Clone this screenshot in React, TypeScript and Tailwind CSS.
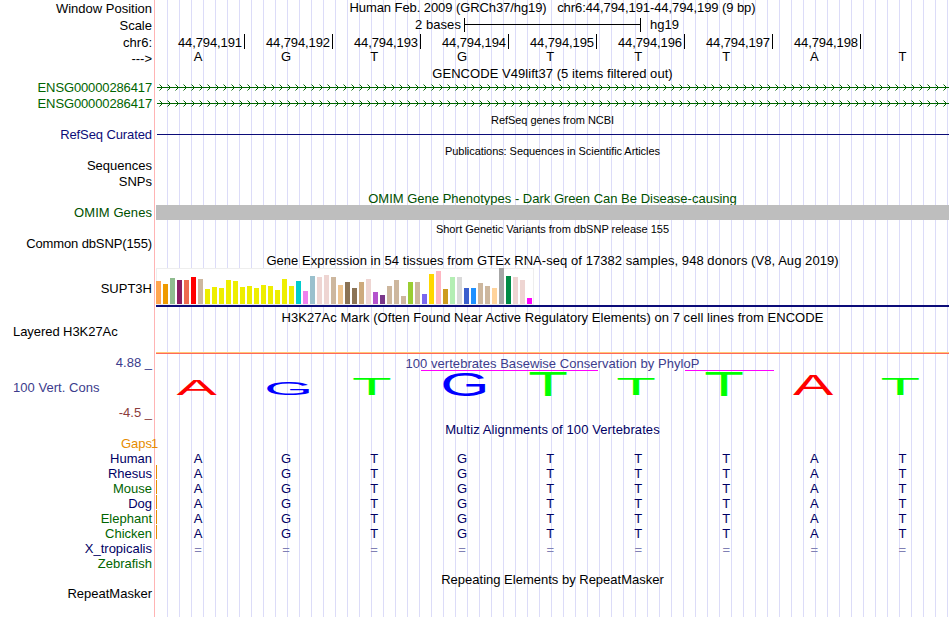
import React from 'react';
import clsx from 'clsx';

const LABELS: { text: string; className: string }[] = [
  { text: 'Window Position', className: 'mt-px' },
  { text: 'Scale', className: 'mt-[2px]' },
  { text: 'chr6:', className: 'mt-[2px]' },
  { text: '--->', className: 'mt-px' },
  { text: 'ENSG00000286417', className: 'mt-[14px] tracking-[-0.13px] text-[#006400]' },
  { text: 'ENSG00000286417', className: 'mt-px tracking-[-0.13px] text-[#006400]' },
  { text: 'RefSeq Curated', className: 'mt-4 tracking-[-0.1px] text-[#0c0c78]' },
  { text: 'Sequences', className: 'mt-4' },
  { text: 'SNPs', className: 'mt-px' },
  { text: 'OMIM Genes', className: 'mt-4 tracking-[0.06px] text-[#005000]' },
  { text: 'Common dbSNP(155)', className: 'mt-4 tracking-[-0.12px]' },
  { text: 'SUPT3H', className: 'mt-[30px]' },
  { text: 'Layered H3K27Ac', className: 'mt-7 self-start tracking-[-0.06px]' },
  { text: '4.88 _', className: 'mt-4 text-[#3c3c8c]' },
  { text: '100 Vert. Cons', className: 'mt-[10px] self-start tracking-[0.04px] text-[#3c3c8c]' },
  { text: '-4.5 _', className: 'mt-[10px] text-[#8c3c3c]' },
  { text: 'Gaps', className: 'mt-4 text-[#e68c00]' },
  { text: 'Human', className: 'text-[#000064]' },
  { text: 'Rhesus', className: 'text-[#000064]' },
  { text: 'Mouse', className: 'text-[#006400]' },
  { text: 'Dog', className: 'text-[#000064]' },
  { text: 'Elephant', className: 'text-[#006400]' },
  { text: 'Chicken', className: 'text-[#006400]' },
  { text: 'X_tropicalis', className: 'text-[#000064]' },
  { text: 'Zebrafish', className: 'text-[#006400]' },
  { text: 'RepeatMasker', className: 'mt-[15px]' },
];

const POSITIONS = [191, 192, 193, 194, 195, 196, 197, 198];
const BASES = 'AGTGTTTAT'.split('');
const ALIGNED = ['Human', 'Rhesus', 'Mouse', 'Dog', 'Elephant', 'Chicken'];

// [height, color] for each GTEx tissue
const TISSUES: [number, string][] = [
  [23, '#ffa54f'], [20, '#ee9a00'], [26, '#8fbc8f'], [24, '#8b1c62'],
  [24, '#ee6a50'], [27, '#ff0000'], [25, '#cdb79e'], [15, '#eeee00'],
  [17, '#eeee00'], [16, '#eeee00'], [24, '#eeee00'], [23, '#eeee00'],
  [17, '#eeee00'], [18, '#eeee00'], [16, '#eeee00'], [19, '#eeee00'],
  [18, '#eeee00'], [14, '#eeee00'], [25, '#eeee00'], [18, '#eeee00'],
  [23, '#00cdcd'], [13, '#ee82ee'], [28, '#9ac0cd'], [27, '#eed5d2'],
  [29, '#eed5d2'], [27, '#cdb79e'], [19, '#eec591'], [22, '#8b7355'],
  [16, '#8b7355'], [22, '#cdaa7d'], [25, '#eed5d2'], [12, '#b452cd'],
  [9, '#7a378b'], [18, '#cdb79e'], [24, '#cdb79e'], [8, '#cdb79e'],
  [22, '#9acd32'], [22, '#cdb79e'], [10, '#7a67ee'], [30, '#ffd700'],
  [33, '#ffb6c1'], [15, '#cd9b1d'], [27, '#b4eeb4'], [27, '#d9d9d9'],
  [16, '#3a5fcd'], [16, '#1e90ff'], [21, '#cdb79e'], [18, '#cdb79e'],
  [16, '#ffd39b'], [36, '#a6a6a6'], [28, '#008b45'], [27, '#eed5d2'],
  [24, '#eed5d2'], [6, '#ff00ff'],
];

// top and bottom are measured from the top of the conservation plot
const LOGO = [
  { base: 'A', top: 9, bottom: 25 },
  { base: 'G', top: 12, bottom: 25 },
  { base: 'T', top: 8, bottom: 25 },
  { base: 'G', top: 2, bottom: 26 },
  { base: 'T', top: 2, bottom: 26 },
  { base: 'T', top: 8, bottom: 25 },
  { base: 'T', top: 2, bottom: 26 },
  { base: 'A', top: 4, bottom: 25 },
  { base: 'T', top: 9, bottom: 25 },
];

const GLYPHS: Record<string, { color: string; left: number; scale: number; ink: number; drop: number }> = {
  A: { color: '#ff0000', left: 20.6, scale: 0.605, ink: 70, drop: 0 },
  G: { color: '#0000ff', left: 20, scale: 0.635, ink: 72, drop: 1 },
  T: { color: '#00ff00', left: 20, scale: 0.65, ink: 69.5, drop: 0 },
};

const Title: React.FC<{ className?: string; small?: boolean; children: React.ReactNode }> = ({
  className,
  small,
  children,
}) => (
  <div
    className={clsx(
      'h-[15px] shrink-0 text-center leading-[15px] whitespace-pre',
      small && 'text-[11px]',
      className,
    )}
  >
    {children}
  </div>
);

const BaseRow: React.FC<{ bases: string[]; className?: string }> = ({ bases, className }) => (
  <div className={clsx('-ml-[2px] flex h-[15px] shrink-0', className)}>
    {bases.map((base, i) => (
      <span key={i} className="w-[88.05px] shrink-0 text-center">
        {base}
      </span>
    ))}
  </div>
);

const GeneArrows: React.FC<{ className?: string }> = ({ className }) => (
  <svg className={clsx('block h-[7px] w-[793px] shrink-0', className)} viewBox="0 0 793 7">
    <path d="M1 3.5H793" stroke="#006400" />
    {Array.from({ length: 99 }, (_, i) => (
      <path
        key={i}
        d={`M${3.5 + i * 8} 0.5l3 3l-3 3`}
        fill="none"
        stroke="#006400"
      />
    ))}
  </svg>
);

const ExpressionChart: React.FC = () => (
  <svg className="block h-[39px] w-[793px] shrink-0" viewBox="0 0 793 39" shapeRendering="crispEdges">
    <rect x="0.5" y="0.5" width="377" height="36" fill="#ffffff" stroke="#eeeeee" />
    {TISSUES.map(([height, color], i) => (
      <rect key={i} x={i * 7} y={36 - height} width="5" height={height} fill={color} />
    ))}
    <rect x="0" y="37" width="793" height="2" fill="#0c0c78" />
  </svg>
);

const ConservationLogo: React.FC = () => (
  <svg className="-mt-px block h-[27px] w-[793px] shrink-0 overflow-visible" viewBox="0 0 793 27">
    <path d="M265 0.5H442M529 0.5H618" stroke="#ff00ff" />
    {LOGO.map(({ base, top, bottom }, i) => {
      const glyph = GLYPHS[base];
      const scaleY = (bottom - top) / glyph.ink;
      return (
        <text
          key={i}
          transform={`translate(${glyph.left + i * 88.05} ${bottom - glyph.drop * scaleY}) scale(${glyph.scale} ${scaleY})`}
          fontSize="100"
          fill={glyph.color}
        >
          {base}
        </text>
      );
    })}
  </svg>
);

const App: React.FC = () => {
  return (
    <div className="relative h-[617px] w-[950px] overflow-hidden bg-white font-['Liberation_Sans',Arial,sans-serif] text-[13px] leading-[15px] text-black">
      <div className="absolute inset-y-0 left-[154px] w-px bg-[#ffb4b4]" />
      <div className="absolute inset-y-0 left-[167px] w-[782px] bg-[repeating-linear-gradient(90deg,#dcdcf8_0px,#dcdcf8_1px,transparent_1px,transparent_12px)]" />

      <div className="relative flex">
        <div className="mr-1 flex w-[152px] shrink-0 flex-col items-end pl-[13px] whitespace-pre">
          {LABELS.map(({ text, className }, i) => (
            <span key={i} className={clsx('h-[15px] shrink-0', className)}>
              {text}
            </span>
          ))}
        </div>

        <div className="flex w-[793px] shrink-0 flex-col">
          <Title className="tracking-[-0.08px]">
            {'Human Feb. 2009 (GRCh37/hg19)   chr6:44,794,191-44,794,199 (9 bp)'}
          </Title>
          <div className="mt-[2px] flex h-[15px] shrink-0">
            <span className="w-[305px] text-right tracking-[0.08px]">2 bases</span>
            <div className="mt-px ml-[3px] h-[14px] w-[177px] border-x border-black pt-[6px]">
              <div className="h-px bg-black" />
            </div>
            <span className="ml-[9px]">hg19</span>
          </div>
          <div className="mt-[2px] ml-px flex h-[15px] shrink-0">
            {POSITIONS.map((position) => (
              <div
                key={position}
                className="w-[88px] border-r border-black pr-[2px] text-right leading-[17px] tracking-[-0.1px]"
              >
                44,794,{position}
              </div>
            ))}
          </div>
          <BaseRow bases={BASES} />
          <Title className="mt-[2px] tracking-[0.05px]">GENCODE V49lift37 (5 items filtered out)</Title>
          <GeneArrows className="mt-[3px]" />
          <GeneArrows className="mt-[9px]" />
          <Title small className="mt-[6px] tracking-[-0.05px]">RefSeq genes from NCBI</Title>
          <div className="mt-[6px] ml-px h-px shrink-0 bg-[#0c0c78]" />
          <Title small className="mt-[9px] tracking-[-0.06px]">
            Publications: Sequences in Scientific Articles
          </Title>
          <Title className="mt-8 text-[#005000]">
            OMIM Gene Phenotypes - Dark Green Can Be Disease-causing
          </Title>
          <div className="relative -mt-px h-[15px] shrink-0 bg-[#bebebe]" />
          <Title small className="mt-[2px]">Short Genetic Variants from dbSNP release 155</Title>
          <Title className="mt-4 tracking-[0.055px]">
            Gene Expression in 54 tissues from GTEx RNA-seq of 17382 samples, 948 donors (V8, Aug 2019)
          </Title>
          <ExpressionChart />
          <Title className="mt-[3px] tracking-[0.05px]">
            H3K27Ac Mark (Often Found Near Active Regulatory Elements) on 7 cell lines from ENCODE
          </Title>
          <div className="mt-[27px] h-[2px] shrink-0 border-t border-[#ffc878] bg-[#ff6a5a]" />
          <Title className="mt-[2px] tracking-[0.04px] text-[#3c3c8c]">
            100 vertebrates Basewise Conservation by PhyloP
          </Title>
          <ConservationLogo />
          <Title className="mt-[25px] tracking-[0.1px] text-[#000064]">Multiz Alignments of 100 Vertebrates</Title>
          <div className="-mt-px -ml-[5px] h-[15px] shrink-0 text-[#e68c00]">1</div>
          {ALIGNED.map((species, i) => (
            <div key={species} className="flex h-[15px] shrink-0">
              <div className={clsx('-mt-px -mr-px h-[14px] w-px shrink-0', i > 0 && 'bg-[#e68c00]')} />
              <BaseRow bases={BASES} className="text-[#000064]" />
            </div>
          ))}
          <BaseRow bases={BASES.map(() => '=')} className="leading-[17px] text-[#8080b4]" />
          <Title className="mt-4">Repeating Elements by RepeatMasker</Title>
        </div>
      </div>
    </div>
  );
};

export default App;
